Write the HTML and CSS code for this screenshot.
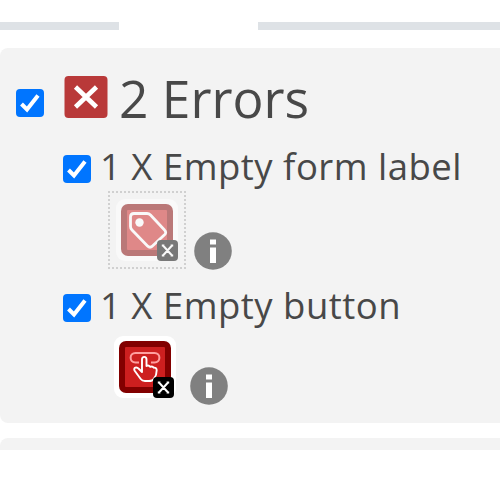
FILE: index.html
```html
<!DOCTYPE html>
<html lang="en">
<head>
<meta charset="utf-8">
<title>Details</title>
<link rel="stylesheet" href="styles.css">
</head>
<body>
<div class="tabs"><span class="line line-start"></span><span class="line line-end"></span></div>
<section class="panel">
  <div class="heading">
    <svg class="check" viewBox="0 0 28 28"><rect width="28" height="28" rx="4" fill="#0075ff"/><path d="M5.500 15 11 20.500 22 6.500" fill="none" stroke="#fff" stroke-width="4"/></svg>
    <svg class="cross" viewBox="0 0 44 42"><rect x=".5" width="43" height="42" rx="4" fill="#b93939"/><path d="M11.500 11 32.500 31M32.500 11 11.500 31" stroke="#fff" stroke-width="4.600" fill="none"/></svg>
    <h2 class="title">2 Errors</h2>
  </div>
  <ul class="types">
    <li class="type">
      <div class="row">
        <svg class="check" viewBox="0 0 28 28"><rect width="28" height="28" rx="4" fill="#0075ff"/><path d="M5.500 15 11 20.500 22 6.500" fill="none" stroke="#fff" stroke-width="4"/></svg>
        <span class="label">1 X Empty form label</span>
      </div>
      <div class="icons">
        <div class="slot selected">
          <svg class="icon faded" viewBox="0 0 64 64">
            <rect width="62" height="62" rx="9" fill="#fff"/>
            <rect x="5" y="5" width="52" height="52" rx="7" fill="#820000"/>
            <rect x="11" y="11" width="40" height="40" rx="1" fill="#cd1f1f"/>
            <path d="M18 14.500h13q2 0 3.500 1.500l14 15q2.400 2.400 0 4.800L36.500 47q-2.500 2.500-5 0L16 31q-1.500-1.500-1.500-3.500V18q0-3.500 3.500-3.500Z" fill="none" stroke="#fff" stroke-width="2.800"/>
            <circle cx="23.500" cy="23.500" r="4.200" fill="#fff"/>
            <rect x="41" y="41" width="21" height="21" rx="4" fill="#000"/>
            <path d="m47 46.500 9 10m0-10-9 10M45.800 46.500h2.600m6.200 0h2.600M45.800 56.500h2.600m6.200 0h2.600" stroke="#fff" stroke-width="2" fill="none"/>
          </svg>
        </div>
        <svg class="info" viewBox="0 0 38 38"><circle cx="19" cy="19" r="18.800" fill="#808080"/><path d="M16 7.500h6v5h-6ZM16 15.500h6V31h-6Z" fill="#fff"/></svg>
      </div>
    </li>
    <li class="type">
      <div class="row">
        <svg class="check" viewBox="0 0 28 28"><rect width="28" height="28" rx="4" fill="#0075ff"/><path d="M5.500 15 11 20.500 22 6.500" fill="none" stroke="#fff" stroke-width="4"/></svg>
        <span class="label">1 X Empty button</span>
      </div>
      <div class="icons">
        <div class="slot">
          <svg class="icon" viewBox="0 0 64 64">
            <rect width="62" height="62" rx="9" fill="#fff"/>
            <rect x="5" y="5" width="52" height="52" rx="7" fill="#820000"/>
            <rect x="11" y="11" width="40" height="40" rx="1" fill="#cd1f1f"/>
            <path d="M25 26.500h-3.500c-6.500 0-6.500-9.500 0-9.500h19c6.500 0 6.500 9.500 0 9.500H37" fill="none" stroke="#ff9f9f" stroke-width="2"/>
            <path d="M28 36V23.500c0-3.500 4.500-3.500 4.500 0V30q2-1.300 3.800.8 2.200-1 3.500.9 2.900-.3 2.900 2.500 0 5-2.700 8.500-1.200 2.300-5 2.300h-4q-2.800 0-4.300-2l-6.200-8.500c-1.200-3 2-4 4.500-1.500Z" fill="#cd1f1f" stroke="#fff" stroke-width="1.900" stroke-linejoin="round"/>
            <rect x="39" y="41" width="21" height="21" rx="4" fill="#000"/>
            <path d="m45 46.500 9 10m0-10-9 10M43.800 46.500h2.600m6.200 0h2.600M43.800 56.500h2.600m6.200 0h2.600" stroke="#fff" stroke-width="2" fill="none"/>
          </svg>
        </div>
        <svg class="info" viewBox="0 0 38 38"><circle cx="19" cy="19" r="18.800" fill="#808080"/><path d="M16 7.500h6v5h-6ZM16 15.500h6V31h-6Z" fill="#fff"/></svg>
      </div>
    </li>
  </ul>
</section>
<section class="panel next"></section>
</body>
</html>
```
FILE: styles.css
```css
* { box-sizing: border-box; }
body {
  margin: 0;
  height: 500px;
  overflow: hidden;
  background: #fff;
  color: #484848;
  font-family: "Open Sans", sans-serif;
}
svg { display: block; flex: none; }
.tabs {
  display: flex;
  justify-content: space-between;
  height: 48px;
  padding-top: 22px;
}
.line { height: 8px; background: #dee2e6; }
.line-start { width: 119px; }
.line-end { width: 242px; }
.panel {
  height: 375px;
  background: #f3f3f3;
  border-radius: 8px 0 0 8px;
}
.next {
  height: 12px;
  margin-top: 15px;
  border-radius: 8px 0 0 0;
}
.heading {
  display: flex;
  height: 97px;
  padding-left: 16px;
}
.check { width: 28px; height: 28px; }
.heading .check { margin-top: 41px; }
.cross { width: 44px; height: 42px; margin: 28px 0 0 20px; }
.title {
  margin: 14px 0 0 11px;
  font-size: 51.5px;
  font-weight: 400;
  line-height: 72px;
  white-space: nowrap;
}
.types { margin: 0; padding: 0 0 0 63px; list-style: none; }
.type { height: 139px; }
.row { display: flex; height: 46px; }
.row .check { margin-top: 10px; }
.label {
  margin-left: 9px;
  font-size: 36.5px;
  letter-spacing: .5px;
  line-height: 43px;
  white-space: nowrap;
}
.icons { display: flex; padding-left: 45px; }
.slot { width: 74px; height: 78px; padding: 6px 0 0 6px; }
.selected { width: 78px; border: 2px dotted #d0d0d0; }
.icon { width: 64px; height: 64px; }
.faded { opacity: .5; }
.info { width: 38px; height: 38px; margin: 41px 0 0 8px; }
.slot:not(.selected) + .info { margin-top: 37px; }
```
